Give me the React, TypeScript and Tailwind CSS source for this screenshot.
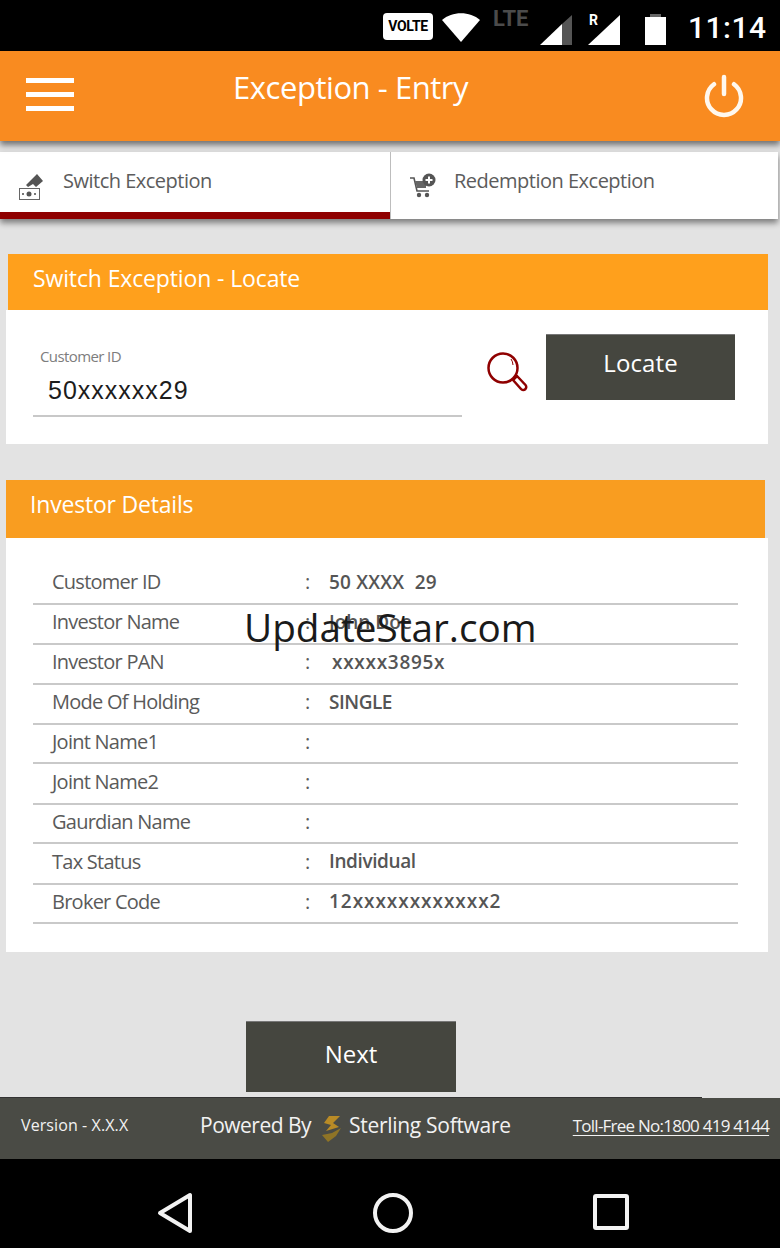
import React from "react";

const FONT = "font-['Open_Sans','Noto_Sans',sans-serif]";

const rows = [
  { label: "Customer ID", value: "50 XXXX  29", h: "h-[40px]", vt: "tracking-[0.2px]" },
  { label: "Investor Name", value: "John Doe", h: "h-[40px]", vt: "tracking-[0px]" },
  { label: "Investor PAN", value: "xxxxx3895x", h: "h-[40px]", vt: "tracking-[0.7px] pl-[3px]" },
  { label: "Mode Of Holding", value: "SINGLE", h: "h-[40px]", vt: "tracking-[-0.5px]" },
  { label: "Joint Name1", value: "", h: "h-[39px]", vt: "" },
  { label: "Joint Name2", value: "", h: "h-[41px]", vt: "" },
  { label: "Gaurdian Name", value: "", h: "h-[39px]", vt: "" },
  { label: "Tax Status", value: "Individual", h: "h-[41px]", vt: "tracking-[-0.4px]" },
  { label: "Broker Code", value: "12xxxxxxxxxxxx2", h: "h-[39px]", vt: "tracking-[0.95px]" },
];

function StatusBar() {
  return (
    <div className="h-[51px] bg-black flex items-center pl-[383px] shrink-0">
      <div className="w-[50px] h-[27px] mt-[2px] bg-white rounded-[4px] flex items-center justify-center text-black text-[14px] font-bold font-['Roboto',sans-serif] tracking-tight">
        VOLTE
      </div>
      <svg width="38" height="32" viewBox="0 0 38 32" className="ml-[9px] mt-[2px]">
        <path d="M0 9 C10 0 28 0 38 9 L19 31 Z" fill="#fff" />
      </svg>
      <span className="ml-[13px] mb-[14px] w-[38px] text-[#4b4b4b] text-[22px] leading-none font-bold font-['Roboto',sans-serif] whitespace-nowrap">LTE</span>
      <svg width="33" height="32" viewBox="0 0 33 32" className="ml-[9px] mt-[8px]">
        <path d="M0 31 L22 10 V31 Z" fill="#fff" />
        <path d="M22 10 L32 1 V31 H22 Z" fill="#555" />
      </svg>
      <div className="relative ml-[15px] mt-[8px] w-[33px] h-[32px]">
        <span className="absolute left-[1px] top-[-4px] text-white text-[14px] font-bold font-['Roboto',sans-serif]">R</span>
        <svg width="33" height="32" viewBox="0 0 33 32">
          <path d="M0 31 L32 1 V31 Z" fill="#fff" />
        </svg>
      </div>
      <svg width="21" height="32" viewBox="0 0 21 32" className="ml-[24px] mt-[8px]">
        <path d="M5 0 H16 V3 H5 Z" fill="#666" />
        <path d="M0 3 H21 V31 H0 Z" fill="#fff" />
      </svg>
      <span className="ml-[22px] mt-[4px] text-white text-[30px] leading-none font-medium font-['Roboto',sans-serif] tracking-[0.5px]">11:14</span>
    </div>
  );
}

function Header() {
  return (
    <div className="relative z-10 h-[90px] bg-[#f98b20] flex items-center pl-[26px] pr-[36px] shadow-[0_4px_6px_rgba(0,0,0,0.5)] shrink-0">
      <div className="flex flex-col gap-[9px] mb-[3px]">
        <div className="w-[48px] h-[5px] bg-white" />
        <div className="w-[48px] h-[5px] bg-white" />
        <div className="w-[48px] h-[5px] bg-white" />
      </div>
      <h1 className="ml-[159px] text-white text-[31px] leading-none mb-[18px] tracking-[-0.45px]">Exception - Entry</h1>
      <svg width="40" height="44" viewBox="0 0 40 44" fill="none" stroke="#fff8ee" strokeWidth="4.5" strokeLinecap="round" className="ml-auto">
        <path d="M20 3 V20" />
        <path d="M10 10.2 A17 17 0 1 0 30 10.2" />
      </svg>
    </div>
  );
}

function Tabs() {
  return (
    <div className="relative mt-[11px] h-[67px] flex shrink-0 shadow-[0_4px_6px_rgba(0,0,0,0.45)] mr-[2px]">
      <div className="w-[390px] bg-white border-b-[7px] border-[#8f0000] flex items-start pt-[15px]">
        <svg width="26" height="28" viewBox="0 0 26 28" className="ml-[18px] mt-[6px]">
          <path d="M8 12 L19 1 L25 8 L18 14 L15 11 L10 14 Z" fill="#555" />
          <rect x="1.5" y="15.5" width="20" height="11" fill="#fff" stroke="#666" />
          <circle cx="11" cy="21" r="2.5" fill="#555" />
          <rect x="4" y="20" width="2" height="2" fill="#777" />
          <rect x="16" y="20" width="2" height="2" fill="#777" />
        </svg>
        <span className="ml-[19px] text-[#5c5c5c] text-[20px] leading-[28px] tracking-[-0.5px]">Switch Exception</span>
      </div>
      <div className="flex-1 bg-white border-l border-[#bdbdbd] flex items-start pt-[15px]">
        <svg width="28" height="26" viewBox="0 0 28 26" className="ml-[18px] mt-[6px]">
          <path d="M1 5 H5 L8 18 H20" fill="none" stroke="#555" strokeWidth="1.6" />
          <path d="M6 8 H17 V15 H8 Z" fill="#666" />
          <circle cx="10" cy="22" r="2.2" fill="#555" />
          <circle cx="18" cy="22" r="2.2" fill="#555" />
          <circle cx="20" cy="7" r="6.5" fill="#555" />
          <path d="M20 3.5 V10.5 M16.5 7 H23.5" stroke="#fff" strokeWidth="2" />
        </svg>
        <span className="ml-[17px] text-[#5c5c5c] text-[20px] leading-[28px] tracking-[-0.5px]">Redemption Exception</span>
      </div>
    </div>
  );
}

function LocateCard() {
  return (
    <div className="mt-[35px] ml-[6px] mr-[12px] shrink-0">
      <div className="ml-[2px] h-[56px] bg-[#ffa01c] flex items-center pl-[25px] pb-[8px] text-white text-[23px] tracking-[-0.13px]">
        Switch Exception - Locate
      </div>
      <div className="h-[134px] bg-white flex items-start">
        <div className="ml-[27px] w-[429px] h-[107px] border-b-2 border-[#c8c8c8]">
          <div className="mt-[37px] ml-[7px] text-[#7d7d7d] text-[15px] leading-[18px] tracking-[-0.6px]">Customer ID</div>
          <div className="mt-[8px] ml-[15px] text-[#1c1c1c] text-[25px] leading-[34px] tracking-[1px] font-['Liberation_Sans',sans-serif]">50xxxxxx29</div>
        </div>
        <svg width="42" height="42" viewBox="0 0 42 42" fill="none" className="ml-[24px] mt-[40px]">
          <circle cx="17" cy="18" r="14.5" stroke="#8f0000" strokeWidth="2.5" />
          <path d="M25 9 A11 11 0 0 1 27 15" stroke="#8f0000" strokeWidth="1" />
          <path d="M27 30 L31 26 L39.5 35 A2.5 2.5 0 0 1 35 39 Z" stroke="#8f0000" strokeWidth="2.5" strokeLinejoin="round" />
        </svg>
        <button className="ml-[18px] mt-[24px] w-[189px] h-[66px] bg-[#45463f] border-t border-[#777] text-white text-[24px] pb-[10px] tracking-[0.1px]">Locate</button>
      </div>
    </div>
  );
}

function InvestorCard() {
  return (
    <div className="mt-[36px] ml-[6px] mr-[12px] shrink-0">
      <div className="mr-[3px] h-[58px] bg-[#f99d20] flex items-center pl-[24px] pb-[10px] text-white text-[23px] tracking-[-0.2px]">
        Investor Details
      </div>
      <div className="h-[414px] bg-white pt-[27px] px-[27px]">
        {rows.map((row) => (
          <div key={row.label} className={`${row.h} flex items-center pb-[4px] border-b-2 border-[#c9c9c9] w-[705px] text-[#5a5a5a] text-[20px] tracking-[-0.75px]`}>
            <span className="ml-[19px] w-[253px]">{row.label}</span>
            <span className="w-[24px]">:</span>
            <span className={`font-semibold text-[#555] text-[19px] whitespace-pre ${row.vt}`}>{row.value}</span>
          </div>
        ))}
      </div>
    </div>
  );
}

function Footer() {
  return (
    <div className="h-[61px] bg-[#4a4b45] flex items-center text-[#f2f2f2] shrink-0">
      <span className="ml-[21px] w-[179px] text-[16px] mb-[8px] tracking-[0.1px]">Version - X.X.X</span>
      <span className="text-[21px] mb-[6px] tracking-[-0.5px]">Powered By</span>
      <svg width="24" height="28" viewBox="0 0 24 28" className="ml-[8px]">
        <path d="M10 1 H21 L14 8 L20 12 L7 16 L12 10 L5 8 Z" fill="#b98b26" />
        <path d="M22 13 L17 21 L9 27 L3 20 L13 18 Z" fill="#8f7426" />
      </svg>
      <span className="ml-[6px] text-[21px] mb-[6px] tracking-[-0.3px]">Sterling Software</span>
      <span className="ml-[62px] text-[17px] underline underline-offset-[3px] mb-[6px] tracking-[-0.76px] whitespace-nowrap">Toll-Free No:1800 419 4144</span>
    </div>
  );
}

function NavBar() {
  return (
    <div className="flex-1 bg-black flex items-start shrink-0">
      <svg width="36" height="42" viewBox="0 0 36 42" fill="none" stroke="#f2f2f2" strokeWidth="4" strokeLinejoin="round" className="ml-[157px] mt-[33px]">
        <path d="M33 3 V39 L3 21 Z" />
      </svg>
      <svg width="42" height="42" viewBox="0 0 42 42" fill="none" stroke="#f2f2f2" strokeWidth="4" className="ml-[179px] mt-[33px]">
        <circle cx="21" cy="21" r="18" />
      </svg>
      <svg width="36" height="36" viewBox="0 0 36 36" fill="none" stroke="#f2f2f2" strokeWidth="4" strokeLinejoin="round" className="ml-[179px] mt-[35px]">
        <rect x="2" y="2" width="32" height="32" rx="1" />
      </svg>
    </div>
  );
}

export default function App() {
  return (
    <div className={`relative w-[780px] h-[1248px] bg-[#e3e3e3] flex flex-col overflow-hidden ${FONT}`}>
      <StatusBar />
      <Header />
      <Tabs />
      <LocateCard />
      <InvestorCard />
      <div className="mt-[69px] ml-[246px] w-[210px] h-[71px] bg-[#45463f] border-t border-[#777] flex items-center justify-center pb-[6px] text-white text-[24px] shrink-0">
        Next
      </div>
      <div className="h-[5px] shrink-0" />
      <div className="h-[1px] w-[702px] bg-[#333] shrink-0" />
      <Footer />
      <NavBar />
      {/* watermark lies over the investor rows */}
      <div className="absolute left-[244px] top-[600px] text-[#1a1a1a] text-[38.7px] leading-[54px] font-['Open_Sans',sans-serif] whitespace-nowrap">
        UpdateStar.com
      </div>
    </div>
  );
}
